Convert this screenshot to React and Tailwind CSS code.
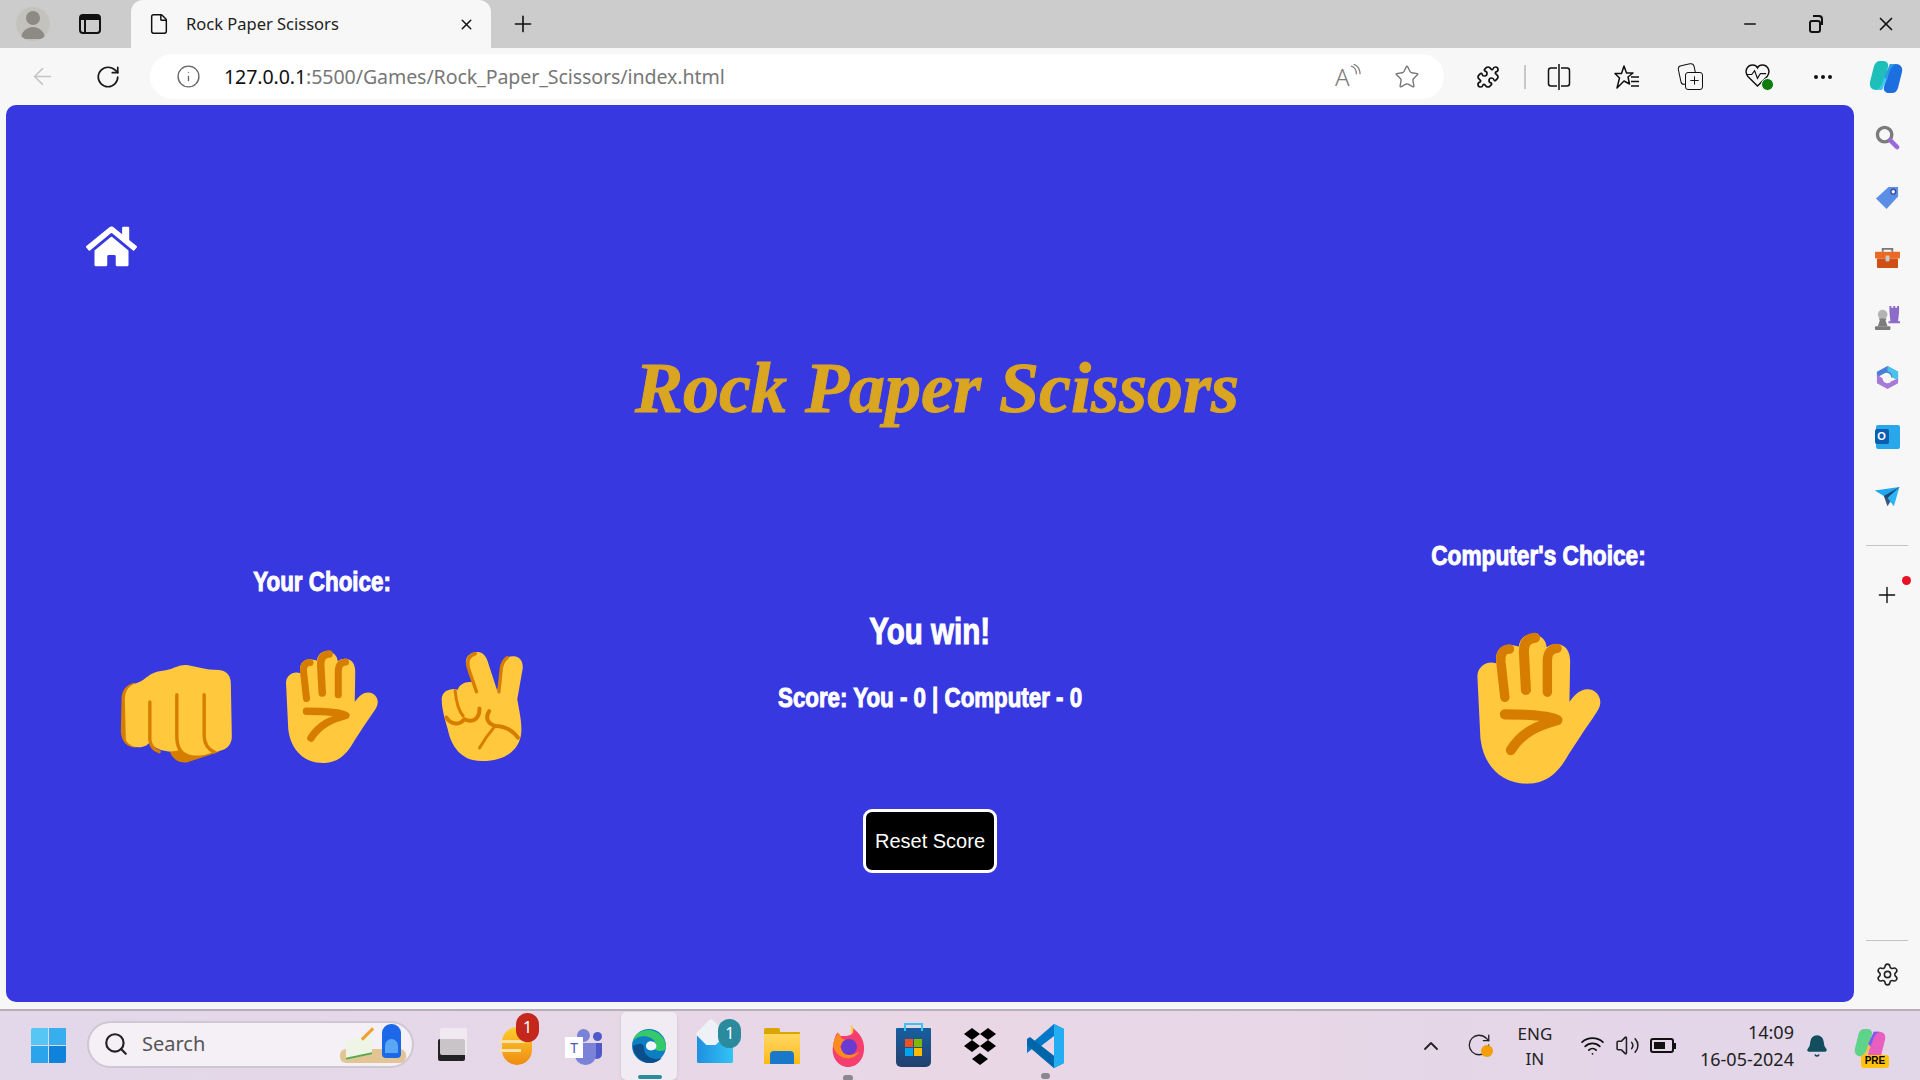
import { ArrowLeft, RotateCw, Info, Star, Puzzle, Plus, X, Minus, Search, Settings, ChevronUp, Wifi, Volume2, Bell, File, Ellipsis } from 'lucide-react'
import { FaHome } from 'react-icons/fa'

const SKIN = '#FFC83D'
const SHADE = '#D67D00'

function OpenHand({ className }) {
  return (
    <svg viewBox="232 304 376 460" className={className}>
      <path fill={SKIN} d="M236 440C236 415 255 398 278 398L292 400L292 385C292 360 310 343 335 345L360 350C362 325 385 308 410 315C430 320 442 335 442 350L444 352C460 340 480 340 495 350C508 360 513 375 513 395L511 515C525 498 540 478 565 478C590 478 605 500 603 520C602 535 590 550 580 565C555 600 530 640 510 670C470 745 425 760 385 760C310 760 255 710 245 625Z" />
      <g fill="none" stroke={SHADE} strokeLinecap="round">
        <path strokeWidth="28" d="M332 358C312 358 304 372 306 395L318 502" />
        <path strokeWidth="30" d="M408 324C385 326 374 340 375 370L381 480" />
        <path strokeWidth="28" d="M474 356C455 358 445 368 445 395L445 487" />
        <path strokeWidth="30" d="M318 553C380 553 450 555 475 570C420 585 370 605 336 660" strokeLinejoin="round" />
      </g>
    </svg>
  )
}

function Fist({ className }) {
  return (
    <svg viewBox="68 342 338 300" className={className}>
      <path fill={SHADE} d="M215 600C225 630 245 640 270 637L365 605L340 570L220 570Z" />
      <path fill={SHADE} d="M72 450C72 420 85 405 110 398L130 420L120 592C90 595 72 575 70 545Z" />
      <path fill={SKIN} d="M82 450C82 420 95 405 120 398C145 390 155 365 195 362C225 360 240 343 268 345C300 350 320 360 365 360C390 362 400 380 400 400L403 560C403 585 385 605 345 605C330 617 275 625 245 600C235 605 190 612 155 578C145 595 100 600 85 570Z" />
      <g fill="none" stroke={SHADE} strokeWidth="10" strokeLinecap="round">
        <path d="M157 456L157 570C160 590 170 600 185 605" />
        <path d="M238 434L238 565C240 595 250 610 268 616" />
        <path d="M320 434L320 560C322 585 335 600 350 606" />
      </g>
    </svg>
  )
}

function Peace({ className }) {
  return (
    <svg viewBox="1030 306 248 332" className={className}>
      <path fill={SKIN} d="M1032 450C1032 430 1050 420 1068 420L1080 422C1085 405 1105 395 1125 400L1105 345C1100 320 1125 305 1145 310C1160 312 1168 330 1172 345L1198 425L1212 350C1215 330 1230 320 1250 322C1270 325 1278 345 1273 365L1258 450C1265 490 1272 520 1270 550C1265 610 1210 637 1150 635C1090 635 1060 590 1050 540C1042 510 1032 480 1032 450Z" />
      <g fill="none" stroke={SHADE} strokeLinecap="round">
        <path strokeWidth="10" d="M1133 314C1112 320 1106 335 1112 358L1136 428" />
        <path strokeWidth="10" d="M1228 326C1215 335 1212 345 1210 360L1203 428" />
        <path strokeWidth="9" d="M1072 424C1075 455 1082 485 1096 500" />
        <path strokeWidth="12" d="M1046 505C1060 528 1085 528 1100 510C1125 522 1145 510 1145 478" />
        <path strokeWidth="12" d="M1174 486C1162 505 1168 522 1192 530C1220 530 1245 545 1260 565" />
        <path strokeWidth="9" d="M1145 596C1160 570 1175 550 1192 530" />
      </g>
    </svg>
  )
}

function EdgeLogo() {
  return (
    <svg viewBox="0 0 36 36" className="w-[36px] h-[36px]">
      <circle cx="18" cy="18" r="17" fill="#0c7fc4" />
      <path fill="#36c96a" d="M35 19C35 10 27 2 17 2C9 2 3 7 2 13C6 8 14 7 20 10C25 13 26 18 23 21C28 24 35 24 35 19Z" />
      <path fill="#f3f6f8" d="M24 21C20 24 15 22 15 18C15 14 19 12 23 14C26 16 26 19 24 21Z" />
      <path fill="#0a4e8c" d="M2 18C2 27 10 35 19 35C24 35 28 33 31 30C23 33 13 29 13 20C13 16 10 14 2 18Z" />
    </svg>
  )
}

function CopilotLogo({ className, pre }) {
  return (
    <svg viewBox="0 0 36 36" className={className}>
      <path fill={pre ? '#5fd38a' : '#1dbfb8'} d="M12 2C9 2 7 4 6 7L2 23C1 28 4 31 8 31L14 31L20 8C21 4 18 2 15 2Z" />
      <path fill={pre ? '#e85fc0' : '#1d6fe0'} d="M24 34C27 34 29 32 30 29L34 13C35 8 32 5 28 5L22 5L16 28C15 32 18 34 21 34Z" />
      <path fill={pre ? '#f2c14e' : '#40c8f0'} d="M14 31L8 31C12 29 14 26 15 22L17 15L20 18Z" />
      <path fill={pre ? '#7a5cf0' : '#2f9be8'} d="M22 5L28 5C24 7 22 10 21 14L19 21L16 18Z" />
    </svg>
  )
}

function TabStrip() {
  return (
    <div className="h-[48px] bg-[#cccccc] flex items-center">
      <div className="ml-[16px] w-[34px] h-[34px] rounded-full bg-[#c4c2bd] flex flex-col items-center justify-center overflow-hidden">
        <div className="w-[14px] h-[14px] rounded-full bg-[#8d8a86] mt-[2px]" />
        <div className="w-[24px] h-[12px] rounded-t-full bg-[#8d8a86] mt-[2px]" />
      </div>
      <div className="ml-[29px] w-[22px] h-[20px] rounded-[4px] border-2 border-[#111] flex flex-col">
        <div className="h-[4px] bg-[#111]" />
        <div className="flex-1 w-[5px] border-r-2 border-[#111]" />
      </div>
      <div className="relative ml-[30px] w-[360px] h-[48px] bg-[#f7f7f7] rounded-t-[12px] flex items-center">
        <File size={22} strokeWidth={1.6} className="ml-[17px] text-[#111]" />
        <span className="ml-[16px] text-[16.5px] text-[#222] font-['Noto_Sans',sans-serif]">Rock Paper Scissors</span>
        <X size={17} strokeWidth={2} className="absolute left-[327px] top-[16px] text-[#111]" />
      </div>
      <Plus size={26} strokeWidth={1.5} className="ml-[19px] text-[#111]" />
      <div className="ml-auto flex items-center">
        <Minus size={18} strokeWidth={2} className="text-[#111]" />
        <div className="relative ml-[50px] w-[14px] h-[18px]">
          <div className="absolute left-0 bottom-0 w-[12px] h-[13px] rounded-[3px] border-2 border-[#111]" />
          <div className="absolute right-0 top-0 w-[10px] h-[10px] rounded-tr-[4px] border-t-2 border-r-2 border-[#111]" />
        </div>
        <X size={22} strokeWidth={1.8} className="ml-[52px] mr-[23px] text-[#111]" />
      </div>
    </div>
  )
}

function Toolbar() {
  return (
    <div className="h-[57px] bg-[#f7f7f7] flex items-center">
      <ArrowLeft size={27} strokeWidth={1.3} className="ml-[29px] text-[#c4c4c4]" />
      <RotateCw size={26} strokeWidth={1.6} className="ml-[39px] text-[#1a1a1a]" />
      <div className="ml-[29px] w-[1294px] h-[45px] bg-white rounded-full flex items-center">
        <Info size={25} strokeWidth={1.3} className="ml-[26px] text-[#666]" />
        <span className="ml-[23px] text-[19.6px] tracking-[-0.1px] text-[#777] font-['Noto_Sans',sans-serif]"><span className="text-[#111]">127.0.0.1</span>:5500/Games/Rock_Paper_Scissors/index.html</span>
        <div className="ml-auto relative w-[26px] h-[26px] flex items-center text-[#7a7a7a]">
          <span className="text-[24px] leading-none font-['Noto_Sans',sans-serif] font-light">A</span>
          <svg viewBox="0 0 12 16" className="absolute right-0 top-0 w-[11px] h-[15px]" fill="none" stroke="#7a7a7a" strokeWidth="1.3">
            <path d="M1 2C5 3 7 7 7 11" />
            <path d="M4 0C9 2 11 6 11 11" />
          </svg>
        </div>
        <Star size={26} strokeWidth={1.3} className="ml-[33px] mr-[24px] text-[#777]" />
      </div>
      <Puzzle size={24} strokeWidth={1.7} className="ml-[32px] text-[#111]" />
      <div className="ml-[24px] w-[2px] h-[24px] bg-[#c8c8c8]" />
      <svg viewBox="0 0 24 28" className="ml-[21px] w-[24px] h-[28px]" fill="none" stroke="#111" strokeWidth="1.5">
        <path d="M10 5H4C2.5 5 1.5 6 1.5 7.5V20.5C1.5 22 2.5 23 4 23H10" />
        <path d="M14 5H20C21.5 5 22.5 6 22.5 7.5V20.5C22.5 22 21.5 23 20 23H14" />
        <path d="M12 1V27" />
      </svg>
      <svg viewBox="0 0 26 26" className="ml-[43px] w-[26px] h-[26px]" fill="none" stroke="#111" strokeWidth="1.5" strokeLinejoin="round">
        <path d="M10 2L12.5 9H19L14 13L15.5 20L10 17L3 24L5.5 14L1 9.5H7.5Z" />
        <path d="M17 13H25M17 17.5H25M17 22H25" />
      </svg>
      <div className="relative ml-[39px] w-[24px] h-[26px]">
        <div className="absolute left-0 top-0 w-[17px] h-[20px] rounded-[4px] border-[1.5px] border-[#111] -rotate-12" />
        <div className="absolute right-0 bottom-0 w-[18px] h-[18px] rounded-[3px] border-[1.5px] border-[#111] bg-[#f7f7f7] flex items-center justify-center">
          <Plus size={13} strokeWidth={1.8} className="text-[#111]" />
        </div>
      </div>
      <div className="relative ml-[42px] w-[26px] h-[28px]">
        <svg viewBox="0 0 26 26" className="w-[25px] h-[25px]" fill="none" stroke="#111" strokeWidth="1.5">
          <path d="M13 24L3 14C-1 9 2 2 8 2C10 2 12 3 13 5C14 3 16 2 18 2C24 2 27 9 23 14Z" />
          <path d="M1 12H7L10 8L13 16L16 11H22" strokeWidth="1.2" />
        </svg>
        <div className="absolute right-[-3px] bottom-0 w-[13px] h-[13px] rounded-full bg-[#107c10] border border-white" />
      </div>
      <Ellipsis size={24} strokeWidth={2} className="ml-[40px] text-[#111]" />
      <CopilotLogo className="ml-[33px] w-[36px] h-[36px]" />
    </div>
  )
}

function Sidebar() {
  return (
    <div className="flex-1 bg-[#f7f7f7] flex flex-col items-center pt-[2px]">
      <div className="h-[60px] flex items-center">
        <svg viewBox="0 0 26 26" className="w-[25px] h-[25px]" fill="none">
          <circle cx="10" cy="10" r="7.5" stroke="#7b7b7b" strokeWidth="3.5" />
          <path d="M16 16L23 23" stroke="#9a6ad6" strokeWidth="4.5" strokeLinecap="round" />
        </svg>
      </div>
      <div className="h-[60px] flex items-center">
        <svg viewBox="0 0 26 26" className="w-[25px] h-[25px]">
          <path fill="#5b8fe6" d="M14 2H24V12L12 25L1 14Z" />
          <circle cx="19" cy="7" r="2.5" fill="#fff" stroke="#3a4ea8" strokeWidth="1.5" />
        </svg>
      </div>
      <div className="h-[60px] flex items-center">
        <svg viewBox="0 0 28 24" className="w-[27px] h-[23px]">
          <path fill="none" stroke="#777" strokeWidth="2" d="M9 6V3H19V6" />
          <rect x="1" y="6" width="26" height="7" fill="#ea6a24" />
          <rect x="3" y="13" width="22" height="10" rx="1" fill="#cf4f14" />
          <rect x="12" y="10" width="4" height="6" fill="#c9c9c9" />
        </svg>
      </div>
      <div className="h-[60px] flex items-center">
        <svg viewBox="0 0 28 28" className="w-[27px] h-[27px]">
          <path fill="#8d6bc8" d="M16 2H18V4H20V2H22V4H24V2H26V8L25 18H27V20H15V18H17L16 8Z" />
          <circle cx="9" cy="11" r="5" fill="#b4b4b4" />
          <path fill="#7c7c7c" d="M5 15H13L12 17L14 23H4L6 17Z" />
          <rect x="1" y="23" width="16" height="4" rx="1" fill="#7c7c7c" />
        </svg>
      </div>
      <div className="h-[60px] flex items-center">
        <svg viewBox="0 0 26 26" className="w-[25px] h-[25px]">
          <path fill="#4a7fd8" d="M13 1L24 7V13H17A5 5 0 0 0 9 9L2 13V7Z" />
          <path fill="#46c4ee" d="M13 1L24 7V16L18 13C18 9 16 7 13 7Z" />
          <path fill="#a77ad8" d="M2 10V19L13 25L24 19V14L17 17A5 5 0 0 1 8 14Z" />
        </svg>
      </div>
      <div className="h-[60px] flex items-center">
        <div className="relative w-[24px] h-[24px] bg-[#28a8ea] rounded-[2px] ml-[1px]">
          <div className="absolute left-[-1px] top-[4px] w-[14px] h-[15px] bg-[#0a5fb0] rounded-[2px] flex items-center justify-center text-white text-[11px] font-bold font-['Liberation_Sans',sans-serif]">O</div>
        </div>
      </div>
      <div className="h-[60px] flex items-center">
        <svg viewBox="0 0 28 24" className="w-[27px] h-[22px]">
          <path fill="#22a7ee" d="M0 5L27 1L18 18L10 11Z" />
          <path fill="#1b3a63" d="M10 11L27 1L14 22Z" opacity="0.85" />
          <path fill="#2cb4f5" d="M14 13L27 1L21 22Z" />
        </svg>
      </div>
      <div className="mt-[18px] w-[42px] h-[1px] bg-[#c4c4c4]" />
      <div className="relative mt-[36px] w-[48px] flex justify-center">
        <Plus size={26} strokeWidth={1.3} className="text-[#111]" />
        <div className="absolute right-0 top-[-6px] w-[9px] h-[9px] rounded-full bg-[#e81123]" />
      </div>
      <div className="mt-auto w-[42px] h-[1px] bg-[#c4c4c4]" />
      <Settings size={25} strokeWidth={1.5} className="mt-[21px] mb-[22px] text-[#222]" />
    </div>
  )
}

function GamePanel() {
  return (
    <div className="ml-[6px] w-[1848px] h-[897px] bg-[#3838e0] rounded-[10px] text-white">
      <div className="pt-[116px] pl-[80px]">
        <FaHome size={51} className="text-white" />
      </div>
      <h1 className="mt-[66px] pl-[14px] h-[100px] text-center text-[#daa520] text-[72px] leading-[100px] font-bold italic font-['Liberation_Serif',serif] [-webkit-text-stroke:1px_#daa520]">Rock Paper Scissors</h1>
      <div className="flex items-start font-['Liberation_Sans',sans-serif] font-bold [-webkit-text-stroke:1px_white]">
        <div className="w-[632px] pt-[129px] flex flex-col items-center">
          <h2 className="h-[30px] leading-[30px] text-[28px] scale-x-[0.8]">Your Choice:</h2>
          <div className="mt-[52px] flex items-start [-webkit-text-stroke:0]">
            <Fist className="mt-[15px] w-[113px] h-[100px]" />
            <OpenHand className="ml-[52px] mt-0 w-[94px] h-[115px]" />
            <Peace className="ml-[62px] mt-[2px] w-[83px] h-[111px]" />
          </div>
        </div>
        <div className="w-[584px] pt-[174px] flex flex-col items-center">
          <h2 className="h-[40px] leading-[40px] text-[36px] scale-x-[0.82]">You win!</h2>
          <p className="mt-[31px] h-[30px] leading-[30px] text-[27px] scale-x-[0.826] whitespace-nowrap">Score: You - 0 | Computer - 0</p>
          <button className="mt-[96px] w-[134px] h-[64px] bg-black border-[3px] border-white rounded-[9px] text-[20px] font-normal font-['Liberation_Sans',sans-serif] [-webkit-text-stroke:0]">Reset Score</button>
        </div>
        <div className="w-[632px] pt-[103px] flex flex-col items-center">
          <h2 className="h-[30px] leading-[30px] text-[28px] scale-x-[0.81] whitespace-nowrap">Computer's Choice:</h2>
          <OpenHand className="mt-[60px] ml-[2px] w-[126px] h-[154px] [-webkit-text-stroke:0]" />
        </div>
      </div>
    </div>
  )
}

function Badge({ className, children }) {
  return (
    <div className={`absolute w-[23px] h-[29px] rounded-full flex items-center justify-center text-white text-[16px] font-['Noto_Sans',sans-serif] ${className}`}>{children}</div>
  )
}

function Taskbar() {
  return (
    <div className="h-[71px] border-t-2 border-[#b7adbb] bg-gradient-to-r from-[#e2d8e9] via-[#e9d7e6] to-[#e2d6e9] flex items-center">
      <div className="ml-[31px] w-[35px] h-[35px] grid grid-cols-2 gap-[1px]">
        <div className="bg-[#56c6f5] rounded-tl-[2px]" />
        <div className="bg-[#37aeee]" />
        <div className="bg-[#2aa4ea]" />
        <div className="bg-[#0f82dc] rounded-br-[2px]" />
      </div>
      <div className="ml-[21px] -mt-[3px] w-[327px] h-[47px] bg-[#f4f0f6] rounded-full border-2 border-[#cfc7d3] flex items-center">
        <Search size={26} strokeWidth={2} className="ml-[14px] text-[#222]" />
        <span className="ml-[13px] text-[20px] text-[#555] font-['Noto_Sans',sans-serif]">Search</span>
        <div className="ml-auto mr-[6px] relative w-[66px] h-[42px]">
          <div className="absolute left-0 bottom-[2px] w-[66px] h-[14px] bg-[#e3c595] rounded-[6px]" />
          <div className="absolute left-[6px] bottom-[8px] w-[26px] h-[20px] bg-[#eef5e6] border-b-2 border-[#5aa84a] -skew-y-12" />
          <div className="absolute left-[26px] top-[3px] w-[3px] h-[16px] bg-[#f0a030] rotate-45" />
          <div className="absolute left-[42px] top-[1px] w-[19px] h-[34px] bg-[#1c68e8] rounded-t-[9px] rounded-b-[4px]" />
          <div className="absolute left-[45px] top-[16px] w-[13px] h-[14px] bg-[#5aa8f5] rounded-t-[7px]" />
        </div>
      </div>
      <div className="ml-[4px] flex items-center">
        <div className="w-[66.1px] flex justify-center">
          <div className="relative w-[27px] h-[30px]">
            <div className="absolute left-0 bottom-0 w-[27px] h-[22px] rounded-[2px] bg-[#222]" />
            <div className="absolute right-[-2px] top-[-3px] w-[27px] h-[27px] rounded-[2px] bg-[#f2eef3]/80" />
          </div>
        </div>
        <div className="w-[66.1px] flex justify-center">
          <div className="relative w-[30px] h-[38px] rounded-full bg-gradient-to-b from-[#fbcf2d] to-[#ef8a10]">
            <div className="absolute left-[-3px] top-[13px] w-[26px] h-[3px] bg-[#f6e1a8]" />
            <div className="absolute left-[-3px] top-[22px] w-[22px] h-[3px] bg-[#f6e1a8]" />
            <Badge className="left-[14px] top-[-14px] bg-[#c4281c]">1</Badge>
          </div>
        </div>
        <div className="w-[66.1px] flex justify-center">
          <div className="relative w-[36px] h-[38px]">
            <div className="absolute left-[12px] top-[2px] w-[13px] h-[13px] rounded-full bg-[#7b83d8]" />
            <div className="absolute left-[28px] top-[5px] w-[9px] h-[9px] rounded-full bg-[#5059c9]" />
            <div className="absolute left-[27px] top-[16px] w-[10px] h-[16px] rounded-b-[5px] bg-[#5059c9]" />
            <div className="absolute left-[10px] top-[16px] w-[21px] h-[22px] rounded-b-[10px] bg-[#7b83d8]" />
            <div className="absolute left-0 top-[10px] w-[18px] h-[21px] bg-white flex items-center justify-center text-[#4b53bc] text-[14px] font-['Noto_Sans',sans-serif]">T</div>
          </div>
        </div>
        <div className="w-[66.1px] flex justify-center">
          <div className="relative w-[56px] h-[68px] bg-[#f1ecf4] rounded-[5px] shadow-sm flex items-center justify-center">
            <EdgeLogo />
            <div className="absolute bottom-[1px] left-[17px] w-[24px] h-[4px] rounded-full bg-[#2b8c9c]" />
          </div>
        </div>
        <div className="w-[66.1px] flex justify-center">
          <div className="relative w-[36px] h-[30px] mt-[4px] bg-gradient-to-r from-[#1f8fe0] to-[#34c4f4] rounded-[2px]">
            <div className="absolute left-[3px] top-[-10px] w-[22px] h-[22px] bg-[#eef2f6] rotate-45 rounded-[2px]" />
            <div className="absolute left-0 bottom-0 w-[36px] h-[18px] bg-gradient-to-r from-[#1f8fe0] to-[#34c4f4] rounded-b-[2px]" />
            <Badge className="left-[21px] top-[-14px] bg-[#2a8a9e]">1</Badge>
          </div>
        </div>
        <div className="w-[66.1px] flex justify-center">
          <div className="relative w-[36px] h-[36px]">
            <div className="absolute left-0 top-0 w-[16px] h-[8px] rounded-t-[2px] bg-[#dba500]" />
            <div className="absolute left-0 top-[4px] w-[36px] h-[32px] bg-gradient-to-b from-[#ffd75e] to-[#fdb900] rounded-[1px] border-t-2 border-[#dba500]" />
            <div className="absolute left-[6px] bottom-0 w-[24px] h-[13px] rounded-t-[4px] bg-[#1a78c8]" />
          </div>
        </div>
        <div className="w-[66.1px] flex justify-center">
          <div className="relative w-[34px] h-[44px]">
            <svg viewBox="0 0 34 44" className="w-[34px] h-[44px]">
              <path fill="#ffcf3a" d="M20 0C22 6 30 10 32 20L20 20Z" />
              <path fill="#f43f6e" d="M2 22C0 34 8 43 17 43C27 43 34 34 33 22C32 12 26 8 22 4C24 12 16 12 12 12C8 12 6 10 7 8C4 11 3 16 2 22Z" />
              <path fill="#ff8a1e" d="M2 22C3 15 5 11 8 9L11 15C16 14 14 20 9 22C11 30 20 33 28 28C22 38 6 36 2 22Z" />
              <circle cx="18" cy="23" r="8" fill="#6a3bd0" />
            </svg>
            <div className="absolute left-[12px] top-[51px] w-[10px] h-[6px] rounded-full bg-[#8b8690]" />
          </div>
        </div>
        <div className="w-[66.1px] flex justify-center">
          <div className="relative w-[35px] h-[39px] mt-[4px] bg-gradient-to-b from-[#155fa0] to-[#22406e] rounded-b-[5px] rounded-t-[1px] grid grid-cols-2 gap-[1px] content-center justify-center px-[9px]">
            <div className="absolute left-[8px] top-[-5px] w-[19px] h-[8px] border-2 border-b-0 border-[#36c5f4]" />
            <div className="h-[8px] bg-[#f25022]" />
            <div className="h-[8px] bg-[#7fba00]" />
            <div className="h-[8px] bg-[#00a4ef]" />
            <div className="h-[8px] bg-[#ffb900]" />
          </div>
        </div>
        <div className="w-[66.1px] flex justify-center">
          <svg viewBox="0 0 36 38" className="w-[36px] h-[38px]">
            <path d="M10 1L18 7L10 13L2 7Z M26 1L34 7L26 13L18 7Z M10 13L18 19L10 25L2 19Z M26 13L34 19L26 25L18 19Z M18 26L26 32L18 38L10 32Z" fill="#000" />
          </svg>
        </div>
        <div className="w-[66.1px] flex justify-center">
          <div className="relative w-[37px] h-[46px]">
            <svg viewBox="0 0 37 46" className="w-[37px] h-[46px]">
              <path fill="#0078c8" d="M27 1L37 6V40L27 45L5 26L0 30V18L5 20ZM27 13L14 23L27 33Z" />
              <path fill="#0065a9" d="M0 16L3 14L27 33V45L0 22Z" />
              <path fill="#23aef3" d="M27 1L37 6V40L27 45Z" />
            </svg>
            <div className="absolute left-[14px] top-[50px] w-[9px] h-[6px] rounded-full bg-[#8b8690]" />
          </div>
        </div>
      </div>
      <ChevronUp size={24} strokeWidth={1.8} className="ml-[340px] text-[#222]" />
      <div className="relative ml-[23px] w-[26px] h-[28px]">
        <RotateCw size={26} strokeWidth={1.2} className="text-[#222]" />
        <div className="absolute right-[-1px] bottom-[3px] w-[12px] h-[12px] rounded-full bg-[#f59e0b]" />
      </div>
      <div className="ml-[23px] w-[40px] text-center text-[17px] leading-[25px] text-[#222] font-['Noto_Sans',sans-serif]">
        <div>ENG</div>
        <div>IN</div>
      </div>
      <Wifi size={25} strokeWidth={1.7} className="ml-[25px] text-[#111]" />
      <Volume2 size={25} strokeWidth={1.5} className="ml-[10px] text-[#222]" />
      <div className="ml-[10px] flex items-center">
        <div className="w-[24px] h-[15px] rounded-[3px] border-2 border-[#111] p-[2px]">
          <div className="w-[11px] h-full bg-[#111]" />
        </div>
        <div className="w-[2px] h-[6px] bg-[#111]" />
      </div>
      <div className="ml-[20px] w-[98px] text-right text-[18px] leading-[27px] text-[#222] font-['Noto_Sans',sans-serif] whitespace-nowrap">
        <div>14:09</div>
        <div>16-05-2024</div>
      </div>
      <Bell size={24} fill="#134e5e" strokeWidth={1.5} className="ml-[11px] text-[#134e5e]" />
      <div className="relative ml-[24px] w-[36px] h-[38px]">
        <CopilotLogo pre className="w-[34px] h-[34px]" />
        <div className="absolute left-[8px] bottom-[-3px] w-[28px] h-[13px] rounded-[3px] bg-[#ffc20e] flex items-center justify-center text-black text-[10px] font-bold leading-none font-['Liberation_Sans',sans-serif]">PRE</div>
      </div>
    </div>
  )
}

function App() {
  return (
    <div className="w-[1920px] h-[1080px] overflow-hidden flex flex-col bg-[#f7f7f7]">
      <TabStrip />
      <Toolbar />
      <div className="h-[904px] flex">
        <GamePanel />
        <Sidebar />
      </div>
      <Taskbar />
    </div>
  )
}

export default App
